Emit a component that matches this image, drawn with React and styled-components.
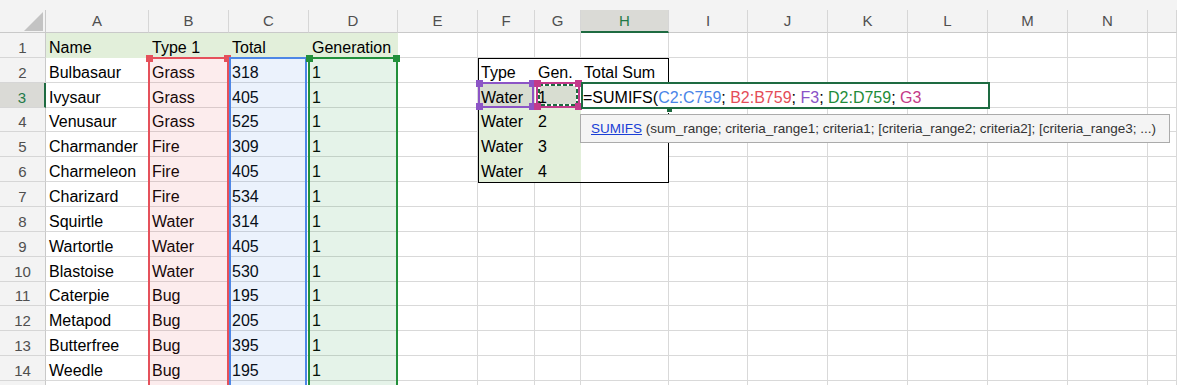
import React from 'react';
import styled, { createGlobalStyle } from 'styled-components';

const GRID = '#d9d9d9';
const HEADER_BG = '#f3f3f3';
const HEADER_LINE = '#c9c9c9';
const SEL_HEADER_BG = '#dadad6';
const EXCEL_GREEN = '#1e6b41';
const ROW1_FILL = '#e2efda';
const SEL_CELL_FILL = '#d8ddd1';

const Global = createGlobalStyle`
  html, body { margin: 0; padding: 0; background: #fff; overflow: hidden; }
  body { font-family: "Liberation Sans", Arial, sans-serif; }
`;

const Page = styled.div`
  width: 1177px;
  height: 385px;
  overflow: hidden;
  background: #fff;
`;

const TopStrip = styled.div`
  height: 10px;
  background: ${HEADER_BG};
`;

const Grid = styled.div`
  display: grid;
  grid-template-columns: 46px 103px 80px 80px 89px 80px 57px 46px 88px 79px 80px 80px 80px 80px 80px 29px;
  grid-template-rows: 23px 25px 25px 25px 24px 25px 25px 25px 25px 25px 25px 24px 25px 25px 25px 25px;
  width: max-content;
`;

const Corner = styled.div`
  grid-row: 1;
  grid-column: 1;
  box-sizing: border-box;
  background: ${HEADER_BG};
  border-right: 1px solid ${HEADER_LINE};
  border-bottom: 1px solid ${HEADER_LINE};
  display: flex;
  align-items: flex-end;
  justify-content: flex-end;
  padding: 0 2px 1px 0;
`;

const ColHead = styled.div`
  grid-row: 1;
  grid-column: ${p => p.$c};
  box-sizing: border-box;
  background: ${p => (p.$selected ? SEL_HEADER_BG : HEADER_BG)};
  border-right: 1px solid #d6d6d6;
  border-bottom: ${p => (p.$selected ? `2px solid ${EXCEL_GREEN}` : `1px solid ${HEADER_LINE}`)};
  display: flex;
  align-items: center;
  justify-content: center;
  font-size: 15px;
  line-height: 18px;
  color: ${p => (p.$selected ? '#1f7a48' : '#4f4f4f')};
`;

const RowHead = styled.div`
  grid-row: ${p => p.$r};
  grid-column: 1;
  box-sizing: border-box;
  background: ${p => (p.$selected ? SEL_HEADER_BG : HEADER_BG)};
  border-right: ${p => (p.$selected ? `2px solid ${EXCEL_GREEN}` : `1px solid ${HEADER_LINE}`)};
  border-bottom: 1px solid #d6d6d6;
  display: flex;
  align-items: flex-end;
  justify-content: center;
  font-size: 15px;
  line-height: 18px;
  color: ${p => (p.$selected ? '#1f7a48' : '#4f4f4f')};
`;

const Cell = styled.div`
  grid-row: ${p => p.$r};
  grid-column: ${p => p.$c};
  box-sizing: border-box;
  min-width: 0;
  position: ${p => (p.$raised ? 'relative' : 'static')};
  z-index: ${p => (p.$raised ? 6 : 'auto')};
  background: ${p => p.$fill || '#fff'};
  border-right: 1px solid ${p => p.$fill || GRID};
  border-bottom: 1px solid ${p => p.$fill || GRID};
  display: flex;
  align-items: flex-end;
  padding: 0 3px;
  font-size: 16px;
  line-height: 18px;
  color: #000;
  white-space: nowrap;
`;

const TableFrame = styled.div`
  grid-row: 3 / 8;
  grid-column: 7 / 10;
  z-index: 1;
  border: 1px solid #000;
  margin-bottom: -1px;
  pointer-events: none;
`;

const RangeBox = styled.div`
  grid-row: ${p => p.$row};
  grid-column: ${p => p.$col};
  position: relative;
  z-index: ${p => p.$z};
  border: 2px solid ${p => p.$color};
  background: ${p => p.$tint || 'transparent'};
  margin: ${p => p.$margin || '0'};
  pointer-events: none;
`;

const Handle = styled.span`
  position: absolute;
  width: 7px;
  height: 7px;
  background: ${p => p.$color};
  ${p => (p.$bottom ? 'bottom: -4px;' : 'top: -4px;')}
  ${p => (p.$right ? 'right: -4px;' : 'left: -4px;')}
`;

const Marquee = styled.svg`
  position: absolute;
  left: 0;
  top: 0;
  width: 100%;
  height: 100%;
  overflow: visible;
`;

const EditBox = styled.div`
  grid-row: 4;
  grid-column: 9 / 14;
  z-index: 5;
  background: #fff;
  border: 2px solid ${EXCEL_GREEN};
  margin: -1px -2px -1px 0;
  display: flex;
  align-items: flex-end;
  font-size: 16px;
  line-height: 18px;
  color: #000;
  white-space: pre;
`;

const Ref = styled.span`
  color: ${p => p.$color};
`;

const FillAnchor = styled.div`
  grid-row: 4;
  grid-column: 9;
  position: relative;
  z-index: 4;
  pointer-events: none;
`;

const FillHandle = styled.span`
  position: absolute;
  right: -3px;
  bottom: -4px;
  width: 5px;
  height: 5px;
  background: ${EXCEL_GREEN};
  box-shadow: 0 0 0 1px #fff;
`;

const Tooltip = styled.div`
  grid-row: 5 / 7;
  grid-column: 9 / 17;
  justify-self: start;
  align-self: start;
  z-index: 7;
  margin: 6px 0 0 -1px;
  background: #f4f4f4;
  border: 1px solid #ababab;
  padding: 0 13px 0 10px;
  font-size: 13.5px;
  line-height: 27px;
  color: #333;
  white-space: nowrap;
`;

const FnLink = styled.a`
  color: #1a3fd6;
  text-decoration: underline;
`;

const COLS = 'ABCDEFGHIJKLMN'.split('');
const ROWS = Array.from({ length: 15 }, (_, i) => i + 1);
const LAST_VISIBLE_ROW = 14;

const pokemon = [
  ['Bulbasaur', 'Grass', 318],
  ['Ivysaur', 'Grass', 405],
  ['Venusaur', 'Grass', 525],
  ['Charmander', 'Fire', 309],
  ['Charmeleon', 'Fire', 405],
  ['Charizard', 'Fire', 534],
  ['Squirtle', 'Water', 314],
  ['Wartortle', 'Water', 405],
  ['Blastoise', 'Water', 530],
  ['Caterpie', 'Bug', 195],
  ['Metapod', 'Bug', 205],
  ['Butterfree', 'Bug', 395],
  ['Weedle', 'Bug', 195],
];

const header = { A: 'Name', B: 'Type 1', C: 'Total', D: 'Generation' };
const table = {
  F2: 'Type', G2: 'Gen.', H2: 'Total Sum',
  F3: 'Water', G3: '1',
  F4: 'Water', G4: '2',
  F5: 'Water', G5: '3',
  F6: 'Water', G6: '4',
};

function cellAt(r, c) {
  let text = '';
  let fill;
  if (r === 1) {
    text = header[c] || '';
    if ('ABCD'.includes(c)) fill = ROW1_FILL;
  } else {
    const p = pokemon[r - 2];
    if (p) {
      if (c === 'A') text = p[0];
      if (c === 'B') text = p[1];
      if (c === 'C') text = String(p[2]);
      if (c === 'D') text = '1';
    }
  }
  const key = `${c}${r}`;
  if (table[key]) text = table[key];
  if (r >= 2 && r <= 6 && 'FGH'.includes(c)) {
    fill = '#fff';
    if (r >= 3 && 'FG'.includes(c)) fill = r === 3 ? SEL_CELL_FILL : ROW1_FILL;
  }
  const raised = key === 'G3';
  if (raised) fill = 'transparent';
  return { text, fill, raised };
}

const Corners = ({ color, bottom = true }) => (
  <>
    <Handle $color={color} />
    <Handle $color={color} $right />
    {bottom && <Handle $color={color} $bottom />}
    {bottom && <Handle $color={color} $bottom $right />}
  </>
);

export default function App() {
  return (
    <Page>
      <Global />
      <TopStrip />
      <Grid>
        <Corner>
          <svg width="19" height="19" viewBox="0 0 19 19">
            <polygon points="19,0 19,19 0,19" fill="#c3c3c3" />
          </svg>
        </Corner>
        {COLS.map((c, i) => (
          <ColHead key={c} $c={i + 2} $selected={c === 'H'}>
            {c}
          </ColHead>
        ))}
        <ColHead $c={COLS.length + 2} />
        {ROWS.map(r => (
          <React.Fragment key={r}>
            <RowHead $r={r + 1} $selected={r === 3}>
              {r <= LAST_VISIBLE_ROW ? r : ''}
            </RowHead>
            {COLS.map((c, i) => {
              const { text, fill, raised } = cellAt(r, c);
              return (
                <Cell key={c} $r={r + 1} $c={i + 2} $fill={fill} $raised={raised}>
                  {text}
                </Cell>
              );
            })}
            <Cell $r={r + 1} $c={COLS.length + 2} />
          </React.Fragment>
        ))}

        <TableFrame />

        <RangeBox $row="3 / -1" $col="3" $z={2} $color="#e5515b" $tint="rgba(232, 80, 90, 0.11)" $margin="-1px 0 0 -1px">
          <Corners color="#e5515b" bottom={false} />
        </RangeBox>
        <RangeBox $row="3 / -1" $col="4" $z={2} $color="#4d87e6" $tint="rgba(74, 134, 232, 0.11)" $margin="-1px 2px 0 0" />
        <RangeBox $row="3 / -1" $col="5" $z={3} $color="#22903b" $tint="rgba(40, 160, 70, 0.12)" $margin="-1px 0 0 -1px">
          <Corners color="#22903b" bottom={false} />
        </RangeBox>

        <RangeBox $row="4" $col="7" $z={3} $color="#8c55c6" $margin="-1px 1px 0 0">
          <Corners color="#8c55c6" />
        </RangeBox>
        <RangeBox $row="4" $col="8" $z={4} $color="#c33b8b" $tint={SEL_CELL_FILL} $margin="-1px 1px 0 1px">
          <Marquee>
            <rect x="1" y="1" width="38" height="20" fill="none" stroke="#fff" strokeWidth="2" />
            <rect x="1" y="1" width="38" height="20" fill="none" stroke={EXCEL_GREEN} strokeWidth="2" strokeDasharray="4 2" />
          </Marquee>
          <Corners color="#c33b8b" />
        </RangeBox>

        <FillAnchor>
          <FillHandle />
        </FillAnchor>

        <EditBox>
          <span>
            =SUMIFS(<Ref $color="#4a85e8">C2:C759</Ref>{'; '}<Ref $color="#e44d58">B2:B759</Ref>{'; '}
            <Ref $color="#8a52c7">F3</Ref>{'; '}<Ref $color="#1f8c39">D2:D759</Ref>{'; '}
            <Ref $color="#c43a88">G3</Ref>
          </span>
        </EditBox>

        <Tooltip>
          <FnLink href="#">SUMIFS</FnLink> (sum_range; criteria_range1; criteria1; [criteria_range2; criteria2]; [criteria_range3; ...)
        </Tooltip>
      </Grid>
    </Page>
  );
}
